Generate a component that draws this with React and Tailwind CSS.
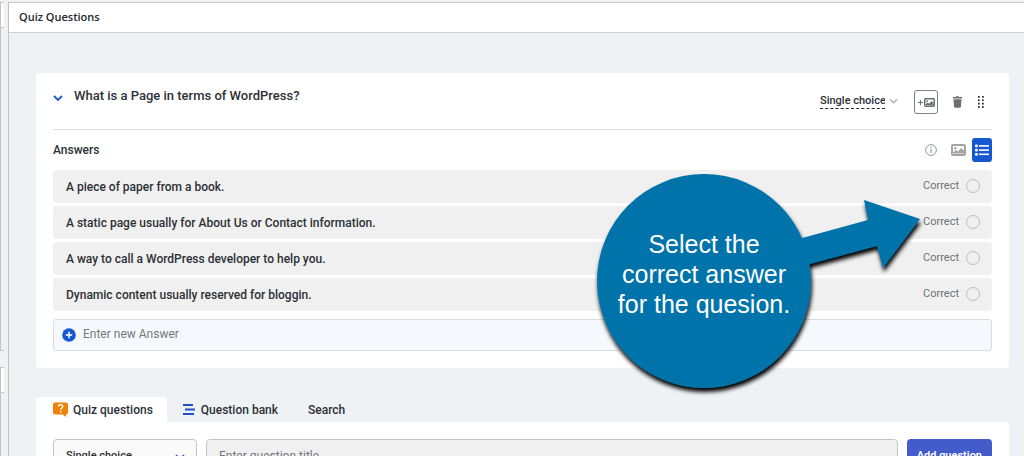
import React, { useState } from "react";

const initialAnswers = [
  "A piece of paper from a book.",
  "A static page usually for About Us or Contact information.",
  "A way to call a WordPress developer to help you.",
  "Dynamic content usually reserved for bloggin.",
];

const questionTypes = ["Single choice", "Multiple choice", "True-False"];

function ChevronDown({ className, strokeWidth = 1.5 }) {
  return (
    <svg viewBox="0 0 10 6" fill="none" className={className} aria-hidden="true">
      <path d="M1 1l4 4 4-4" stroke="currentColor" strokeWidth={strokeWidth} />
    </svg>
  );
}

function ImageIcon({ className }) {
  return (
    <svg viewBox="0 0 15 12" className={className} aria-hidden="true">
      <rect x="1" y="1" width="13" height="10" rx="1" fill="none" stroke="currentColor" strokeWidth="2" />
      <circle cx="4.2" cy="4.2" r="1.2" fill="currentColor" />
      <path d="M2 9.6V8.4L5 6l2 1.6L10.2 4 13 6.6v3z" fill="currentColor" />
    </svg>
  );
}

// The editor frame visible left of the panel
function SideFrame() {
  return (
    <div className="w-2 shrink-0 flex flex-col gap-4 pt-[2px]">
      <div className="h-[349px] w-1 border-l border-b border-[#c3c4c7]">
        <div className="h-[26px] bg-white border-t border-b border-[#c3c4c7]" />
      </div>
      <div className="flex-1 w-1 border-l border-[#c3c4c7]">
        <div className="h-[26px] bg-white border-t border-b border-[#c3c4c7]" />
      </div>
    </div>
  );
}

function Callout() {
  return (
    <div className="absolute top-0 right-[68px] w-[334px] h-[240px] pointer-events-none">
      <svg viewBox="0 0 334 240" className="absolute inset-0" aria-hidden="true">
        <defs>
          <filter id="calloutShadow" x="-10%" y="-10%" width="120%" height="120%">
            <feDropShadow dx="1" dy="4" stdDeviation="2" floodColor="#000" floodOpacity="1" />
          </filter>
        </defs>
        <g fill="#0073aa" filter="url(#calloutShadow)">
          <circle cx="114" cy="111" r="107" />
          <path d="M205 70L278 50 274 30 330 49 293 98 287 76 205 98z" />
        </g>
      </svg>
      <div className="relative w-[228px] h-[208px] flex items-center justify-center text-center text-white text-[25px] leading-[30px] font-['Liberation_Sans',Arial,sans-serif]">
        <p>
          Select the
          <br />
          correct answer
          <br />
          for the quesion.
        </p>
      </div>
    </div>
  );
}

function QuestionHeader() {
  return (
    <div className="flex items-start justify-between h-[57px] border-b border-[#dcdee0]">
      <div className="flex items-center gap-[11px] pt-[13px]">
        <button type="button" aria-label="Collapse question" className="text-[#1558d0] pt-1">
          <ChevronDown className="w-[10px] h-[6px]" strokeWidth={1.8} />
        </button>
        <h3 className="text-[13px] leading-5 font-medium text-[#2c3136]">
          What is a Page in terms of WordPress?
        </h3>
      </div>

      <div className="flex items-center pt-[17px] pr-2 text-[#6c7075]">
        <div className="flex items-center mr-4 pb-[2px]">
          <select
            aria-label="Question type"
            className="appearance-none w-[65px] h-4 mr-1 text-[11px] leading-[14px] font-medium text-[#2c3136] border-b border-dashed border-[#23282d] outline-none"
          >
            {questionTypes.map((type) => (
              <option key={type}>{type}</option>
            ))}
          </select>
          <ChevronDown className="w-[9px] h-[6px] text-[#b9b2a8]" />
        </div>
        <button
          type="button"
          aria-label="Add image"
          className="size-6 mr-[14px] flex items-center justify-center gap-px border border-[#7d8085] rounded-[3px]"
        >
          <svg viewBox="0 0 5 5" className="size-[5px]" stroke="currentColor" aria-hidden="true">
            <path d="M2.5 0v5M0 2.5h5" />
          </svg>
          <ImageIcon className="w-[11px] h-[9px]" />
        </button>
        <button type="button" aria-label="Delete question" className="mr-[15px]">
          <svg viewBox="0 0 11 12" className="w-[11px] h-3" fill="currentColor" aria-hidden="true">
            <path d="M1 1h2.8L4.3.3h2.4l.5.7H10v1.5H1zM1.5 3.3h8l-.5 7.2c0 .7-.5 1.2-1.2 1.2H3.2c-.7 0-1.2-.5-1.2-1.2z" />
          </svg>
        </button>
        <button type="button" aria-label="Move question" className="text-[#23282d]">
          <svg viewBox="0 0 6 12" className="w-[6px] h-3" fill="currentColor" aria-hidden="true">
            {[0, 3.4, 6.8, 10.2].map((y) => (
              <g key={y}>
                <rect x="0" y={y} width="1.7" height="1.7" />
                <rect x="4" y={y} width="1.7" height="1.7" />
              </g>
            ))}
          </svg>
        </button>
      </div>
    </div>
  );
}

function QuestionCard() {
  const [correct, setCorrect] = useState(null);

  return (
    <section className="bg-white rounded-[4px] px-[17px] pb-[17px]">
      <QuestionHeader />

      {/* ANSWERS TOOLBAR */}
      <div className="flex items-center justify-between h-10">
        <h4 className="text-xs font-medium text-[#2c3136]">Answers</h4>
        <div className="flex items-center">
          <svg viewBox="0 0 12 12" className="size-3 mr-[14px] text-[#8f98a5]" aria-hidden="true">
            <circle cx="6" cy="6" r="5.4" fill="none" stroke="currentColor" />
            <path d="M5.4 5h1.2v4H5.4zM5.4 2.8h1.2V4H5.4z" fill="currentColor" />
          </svg>
          <button type="button" aria-label="Image answers" className="mr-[6px] text-[#a3a3a3]">
            <ImageIcon className="w-[15px] h-3" />
          </button>
          <button
            type="button"
            aria-label="List answers"
            className="w-5 h-6 flex items-center justify-center bg-[#1558d0] rounded-[3px] text-white"
          >
            <svg viewBox="0 0 14 12" className="w-[14px] h-3" fill="currentColor" aria-hidden="true">
              {[0.5, 4.7, 8.9].map((y) => (
                <g key={y}>
                  <rect x="0" y={y} width="2.8" height="2.8" rx="1" />
                  <rect x="4" y={y + 0.6} width="10" height="1.6" />
                </g>
              ))}
            </svg>
          </button>
        </div>
      </div>

      {/* ANSWERS LIST */}
      <div className="relative">
        <ul className="flex flex-col gap-[3px]">
          {initialAnswers.map((answer, index) => (
            <li
              key={answer}
              className="h-[33px] pl-[13px] pr-3 flex items-center justify-between bg-[#f0f0f0] rounded-[4px]"
            >
              <span className="text-xs font-medium text-[#2c3136]">{answer}</span>
              <label className="flex items-center gap-[7px] pb-[2px] text-[11px] leading-[14px] text-[#6f7276]">
                Correct
                <input
                  type="radio"
                  name="correct"
                  checked={correct === index}
                  onChange={() => setCorrect(index)}
                  className="appearance-none size-[14px] rounded-full border border-[#bcbcbc] checked:bg-[#1558d0]"
                />
              </label>
            </li>
          ))}
        </ul>

        <div className="mt-2 h-[32px] px-2 flex items-center gap-[7px] bg-[#f5f9fd] border border-[#d9dde1] rounded-[3px]">
          <button type="button" aria-label="Add answer">
            <svg viewBox="0 0 14 14" className="size-[14px]" aria-hidden="true">
              <circle cx="7" cy="7" r="6.8" fill="#1558d0" />
              <path d="M7 3.8v6.4M3.8 7h6.4" stroke="#fff" strokeWidth="1.5" />
            </svg>
          </button>
          <input
            type="text"
            aria-label="Enter new Answer"
            placeholder="Enter new Answer"
            className="flex-1 pb-[2px] text-xs text-[#23282d] placeholder:text-[#74787d] outline-none"
          />
        </div>

        <Callout />
      </div>
    </section>
  );
}

function AddQuestion() {
  return (
    <section className="mt-[29px]">
      {/* TABS */}
      <div className="flex items-stretch h-[25px] text-xs font-medium text-[#2c3136]">
        <button type="button" className="pl-[17px] pr-[14px] flex items-center gap-[5px] bg-white rounded-t-[4px]">
          <svg viewBox="0 0 15 15" className="size-[15px]" aria-hidden="true">
            <path d="M2 .5h11a2 2 0 012 2v8a2 2 0 01-2 2V15l-3.5-2.5H2a2 2 0 01-2-2v-8a2 2 0 012-2z" fill="#ee8208" />
            <path d="M5.2 4.6c.2-1.3 1-1.9 2.3-1.9 1.3 0 2.2.7 2.2 1.8 0 1.5-2 1.5-2 3.2" fill="none" stroke="#fff" strokeWidth="1.4" />
            <circle cx="7.7" cy="9.8" r=".9" fill="#fff" />
          </svg>
          Quiz questions
        </button>
        <button type="button" className="pl-4 pr-[14px] flex items-center gap-[6px]">
          <svg viewBox="0 0 12 11" className="w-3 h-[11px]" fill="#1f4fc4" aria-hidden="true">
            <path d="M0 0h10v2H0zM2 4.5h10v2H2zM0 9h11v2H0z" />
          </svg>
          Question bank
        </button>
        <button type="button" className="px-4 flex items-center">
          Search
        </button>
      </div>

      {/* NEW QUESTION FORM */}
      <form
        className="flex gap-[9px] bg-white rounded-tr-[4px] px-[17px] py-[17px]"
        onSubmit={(e) => e.preventDefault()}
      >
        <div className="relative w-36">
          <select
            aria-label="New question type"
            className="appearance-none w-full h-[34px] px-3 text-[11px] font-medium text-[#2c3136] bg-[#fafafa] border border-[#c3c4c7] rounded-[4px]"
          >
            {questionTypes.map((type) => (
              <option key={type}>{type}</option>
            ))}
          </select>
          <ChevronDown className="absolute right-3 top-[15px] w-[10px] h-[6px] text-[#2b50c8]" />
        </div>
        <input
          type="text"
          aria-label="Enter question title"
          placeholder="Enter question title"
          className="flex-1 min-w-0 h-[34px] px-3 text-xs bg-[#f0f0f0] border border-[#c3c4c7] rounded-[4px] placeholder:text-[#74787d]"
        />
        <button
          type="submit"
          className="h-[34px] px-[10px] text-[11px] font-semibold text-white bg-[#445bcb] rounded-[4px]"
        >
          Add question
        </button>
      </form>
    </section>
  );
}

export default function App() {
  return (
    <div className="h-screen overflow-hidden flex bg-[#f1f1f1] font-[Roboto,sans-serif]">
      <SideFrame />
      <div className="flex-1 min-w-0 mt-[2px] border-l border-t border-[#c3c4c7] flex flex-col">
        <h2 className="h-[30px] shrink-0 px-[10px] flex items-center bg-white border-b border-[#ccd0d4] text-[11px] font-semibold text-[#23282d] font-['Open_Sans',sans-serif]">
          Quiz Questions
        </h2>
        <div className="flex-1 px-1 pt-[2px]">
          <div className="h-full bg-[#eef2f5] pl-[23px] pr-[11px] pt-[38px]">
            <QuestionCard />
            <AddQuestion />
          </div>
        </div>
      </div>
    </div>
  );
}
